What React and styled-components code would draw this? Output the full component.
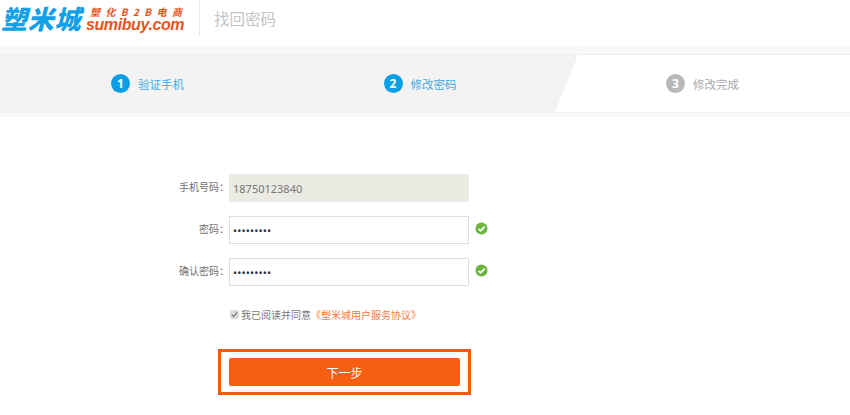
import React from 'react';
import styled, { createGlobalStyle } from 'styled-components';

const GlobalStyle = createGlobalStyle`
  html, body {
    margin: 0;
    padding: 0;
    background: #fff;
    overflow: hidden;
  }
  body {
    font-family: "Noto Sans CJK SC", "Noto Sans", sans-serif;
    font-size: 12px;
    color: #666;
  }
`;

const Header = styled.header`
  height: 47px;
  display: flex;
  align-items: flex-start;
`;

const Logo = styled.div`
  width: 199px;
  height: 36px;
  display: flex;
  border-right: 1px solid #e8e8e8;
  box-sizing: content-box;
`;

const LogoMark = styled.div`
  width: 85px;
  padding-left: 1px;
  font-size: 26px;
  line-height: 35px;
  font-weight: 900;
  font-style: italic;
  color: #12a0e8;
  white-space: nowrap;
  letter-spacing: 0.8px;
`;

const LogoSide = styled.div`
  display: flex;
  flex-direction: column;
  padding-top: 6px;
`;

const LogoSlogan = styled.div`
  font-size: 10px;
  line-height: 12px;
  font-weight: 700;
  font-style: italic;
  color: #e8551c;
  letter-spacing: 5.4px;
  padding-left: 4px;
  white-space: nowrap;
`;

const LogoDomain = styled.div`
  font-family: "Liberation Sans", Arial, sans-serif;
  font-size: 16px;
  line-height: 14px;
  font-weight: 700;
  font-style: italic;
  color: #e8551c;
  letter-spacing: -0.4px;
`;

const PageTitle = styled.h1`
  margin: 0 0 0 14px;
  font-size: 15.5px;
  line-height: 36px;
  font-weight: 400;
  color: #c4c4c4;
`;

const StepBand = styled.div`
  height: 70px;
  padding: 7px 0 4px;
  box-sizing: border-box;
  background: #f8f8f8;
`;

const StepTrack = styled.div`
  height: 59px;
  display: flex;
  background: #f3f3f3;
  border-top: 1px solid #f0f0f0;
  border-bottom: 1px solid #eeeeee;
  box-sizing: border-box;
`;

const Step = styled.div`
  position: relative;
  width: ${(p) => p.$width}px;
  display: flex;
  align-items: center;
  justify-content: center;
  gap: 8px;
  padding-right: ${(p) => p.$shift || 0}px;
  box-sizing: border-box;
  background: ${(p) => (p.$current ? '#fff' : 'transparent')};
  clip-path: ${(p) => (p.$current ? 'polygon(23px 0, 100% 0, 100% 100%, 0 100%)' : 'none')};
  color: ${(p) => (p.$muted ? '#a8a8a8' : '#3fa9e6')};
`;

const StepSeam = styled.span`
  position: absolute;
  left: 12px;
  top: 0;
  bottom: 0;
  width: 1px;
  background: #f5f5f5;
  transform: skewX(-19deg);
`;

const StepNum = styled.span`
  width: 19px;
  height: 19px;
  border-radius: 50%;
  display: flex;
  align-items: center;
  justify-content: center;
  background: ${(p) => (p.$muted ? '#b8b8b8' : '#0b9fe6')};
  color: #fff;
  font-family: "Open Sans", sans-serif;
  font-size: 12px;
  font-weight: 700;
  line-height: 1;
`;

const StepLabel = styled.span`
  font-size: 11.5px;
  line-height: 16px;
`;

const Form = styled.form`
  margin: 57px 0 0 170px;
  display: flex;
  flex-direction: column;
  gap: 14px;
`;

const Row = styled.div`
  display: flex;
  align-items: center;
  height: 28px;
`;

const Label = styled.label`
  width: 59px;
  padding: 0 0 3px;
  box-sizing: border-box;
  text-align: right;
  font-size: 10px;
  color: #707070;
  white-space: nowrap;
`;

const Input = styled.input`
  width: 240px;
  height: 28px;
  box-sizing: border-box;
  padding: 0 3px;
  border: 1px solid ${(p) => (p.disabled ? '#ebeae3' : '#dedede')};
  background: ${(p) => (p.disabled ? '#ebeae3' : '#fff')};
  color: ${(p) => (p.disabled ? '#777' : '#333')};
  font-family: "Noto Sans", sans-serif;
  font-size: 11px;
  outline: none;
  opacity: 1;
  -webkit-text-fill-color: currentColor;
  &[type='password'] {
    font-size: 11px;
    letter-spacing: 0.1px;
  }
`;

const CheckMark = styled.svg`
  width: 13px;
  height: 13px;
  margin: -3px 0 0 6px;
`;

const Agreement = styled.div`
  margin: 5px 0 0 60px;
  height: 18px;
  display: flex;
  align-items: center;
  font-size: 10px;
  color: #777;
`;

const AgreeBox = styled.span`
  width: 9px;
  height: 9px;
  margin-right: 2px;
  border-radius: 2px;
  background: #dcdcdc;
  display: flex;
  align-items: center;
  justify-content: center;
  svg {
    width: 7px;
    height: 7px;
  }
`;

const AgreeLink = styled.a`
  color: #f87a3c;
  text-decoration: none;
`;

const SubmitFrame = styled.div`
  margin: 26px 0 0 48px;
  width: 253px;
  height: 46px;
  box-sizing: border-box;
  border: 3px solid #f45a0a;
  padding: 6px 8px;
`;

const SubmitButton = styled.button`
  display: block;
  width: 231px;
  height: 28px;
  border: none;
  border-radius: 2px;
  background: #f65f12;
  color: #fff;
  font-family: "Noto Sans CJK SC", sans-serif;
  font-size: 12px;
  padding: 0;
`;

const steps = [
  { num: 1, label: '验证手机', width: 295 },
  { num: 2, label: '修改密码', width: 260, seam: true, shift: 10 },
  { num: 3, label: '修改完成', width: 295, muted: true, current: true },
];

function ValidIcon() {
  return (
    <CheckMark viewBox="0 0 13 13">
      <circle cx="6.5" cy="6.5" r="6" fill="#6cb33f" />
      <path d="M3.5 6.8 5.6 8.8 9.6 4.6" fill="none" stroke="#fff" strokeWidth="1.8" />
    </CheckMark>
  );
}

export default function App() {
  return (
    <>
      <GlobalStyle />
      <Header>
        <Logo>
          <LogoMark>塑米城</LogoMark>
          <LogoSide>
            <LogoSlogan>塑化B2B电商</LogoSlogan>
            <LogoDomain>sumibuy.com</LogoDomain>
          </LogoSide>
        </Logo>
        <PageTitle>找回密码</PageTitle>
      </Header>

      <StepBand>
        <StepTrack>
          {steps.map((s) => (
            <Step key={s.num} $width={s.width} $muted={s.muted} $current={s.current} $shift={s.shift}>
              {s.seam && <StepSeam />}
              <StepNum $muted={s.muted}>{s.num}</StepNum>
              <StepLabel>{s.label}</StepLabel>
            </Step>
          ))}
        </StepTrack>
      </StepBand>

      <Form onSubmit={(e) => e.preventDefault()}>
        <Row>
          <Label>手机号码：</Label>
          <Input type="text" value="18750123840" disabled readOnly />
        </Row>
        <Row>
          <Label>密码：</Label>
          <Input type="password" value="123456789" readOnly />
          <ValidIcon />
        </Row>
        <Row>
          <Label>确认密码：</Label>
          <Input type="password" value="123456789" readOnly />
          <ValidIcon />
        </Row>
        <div>
          <Agreement>
            <AgreeBox>
              <svg viewBox="0 0 8 8">
                <path d="M1 4.2 3.2 6.4 7 1.6" fill="none" stroke="#777" strokeWidth="1.4" />
              </svg>
            </AgreeBox>
            我已阅读并同意
            <AgreeLink href="#">《塑米城用户服务协议》</AgreeLink>
          </Agreement>
          <SubmitFrame>
            <SubmitButton type="submit">下一步</SubmitButton>
          </SubmitFrame>
        </div>
      </Form>
    </>
  );
}
